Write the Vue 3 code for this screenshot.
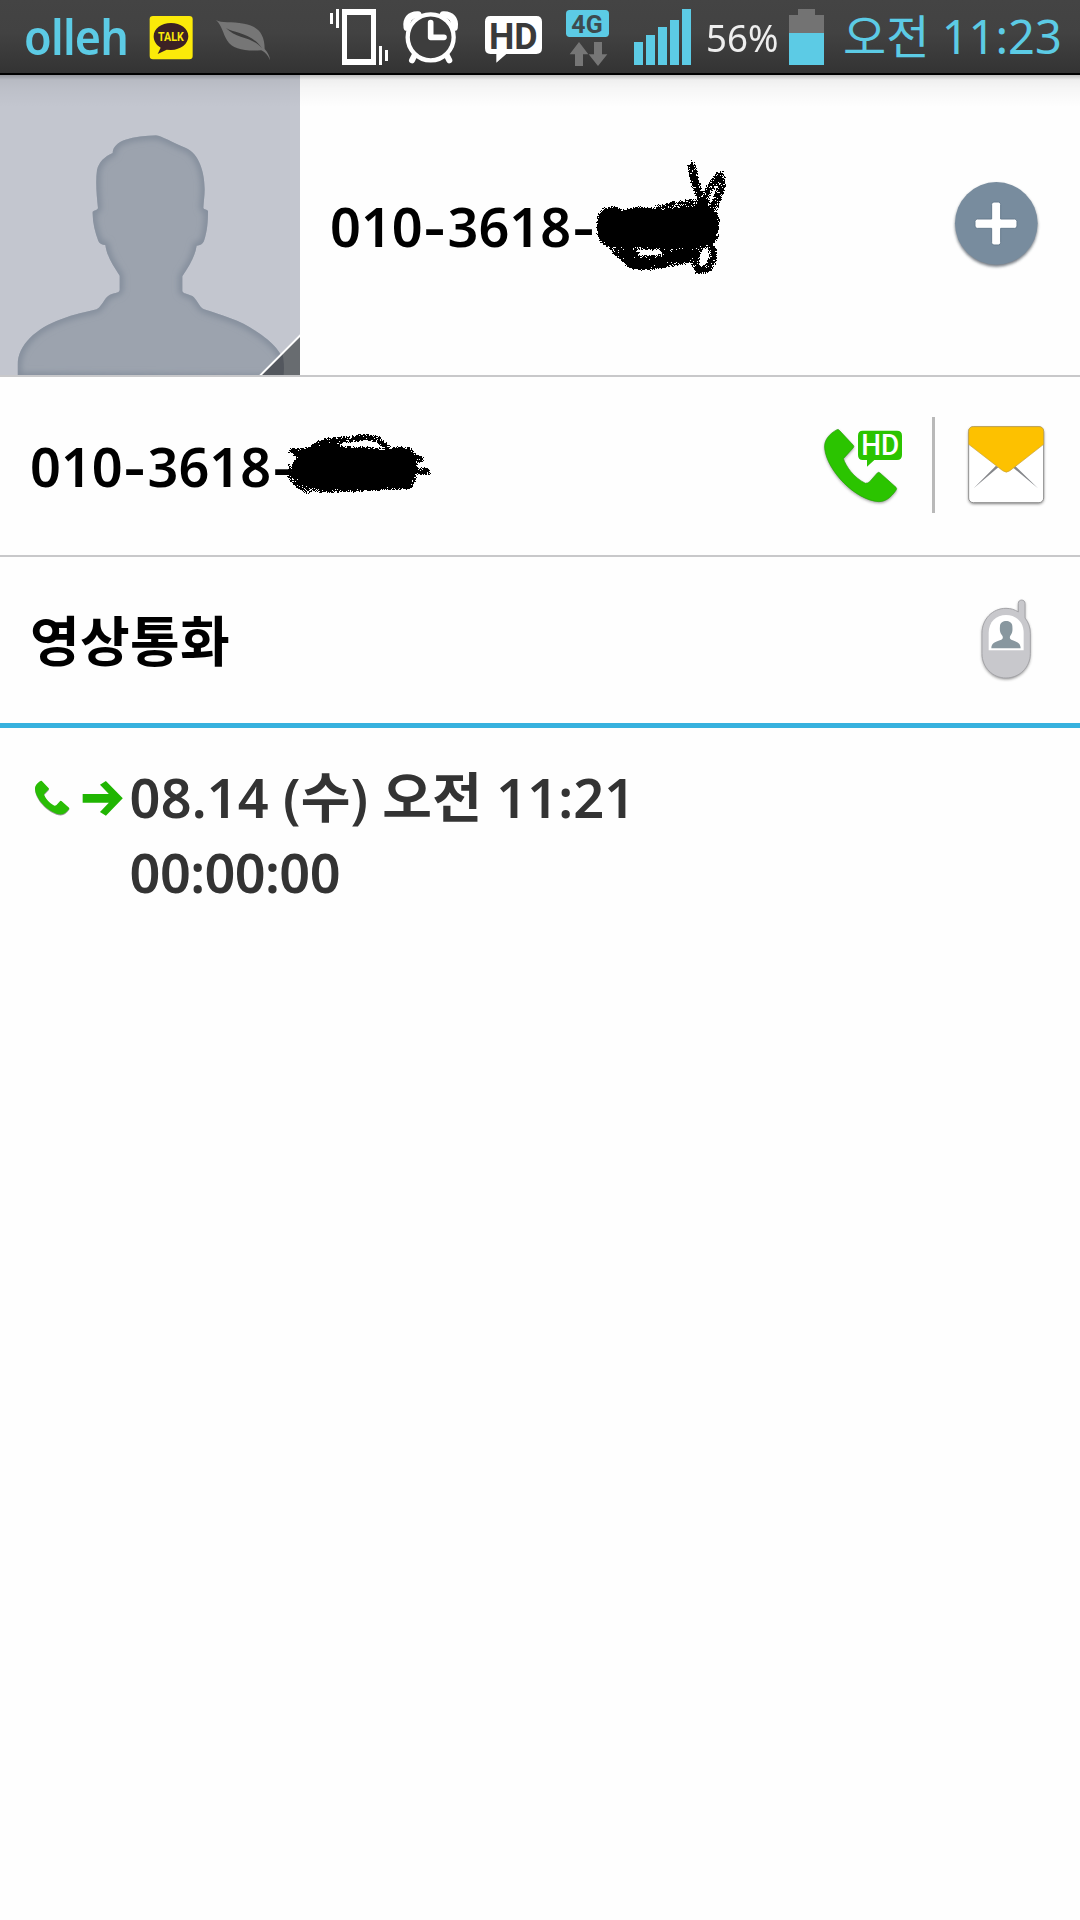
<template>
  <div class="screen">
    <!-- status bar -->
    <header class="status">
      <span class="carrier">olleh</span>
      <svg class="talk" viewBox="444 0 138 219">
        <rect x="449" y="48" width="129" height="130" rx="10" fill="#fbea09" />
        <path d="M513 69c29 0 52 17 52 40s-23 41-52 41l-13-1-27 13 9-19c-13-7-21-20-21-34 0-23 23-40 52-40z" fill="#3c2124" />
        <text x="474" y="123" class="roboto" font-size="37" font-weight="700" textLength="77" lengthAdjust="spacingAndGlyphs" fill="#fbea09">TALK</text>
      </svg>
      <svg class="leaf" viewBox="642 0 174 219">
        <path d="M648 60c16 10 46 4 84 11 41 7 62 30 62 76 9 10 15 20 16 34-6-15-13-24-26-30-48 3-86-2-103-30-13-22-14-43-33-61z" fill="#767676" />
        <path d="M678 84c24 16 77 13 108 61-32-37-75-27-108-61z" fill="#3d3d3d" />
      </svg>
      <svg class="vibrate" viewBox="87 0 180 219">
        <path fill="#fff" fill-rule="evenodd" d="M126 27h102v168H126zM141 45v132h72V45z" />
        <path fill="#fff" d="M90 39h9v33h-9zM108 27h9v57h-9zM237 138h9v57h-9zM255 150h9v33h-9z" />
      </svg>
      <svg class="alarm" viewBox="303 0 180 219">
        <g fill="none" stroke="#fff" stroke-linecap="round">
          <path d="M321 82c-4-23 9-39 33-38M463 82c4-23-9-39-33-38" stroke-width="21" />
          <path d="M344 165l-8 16M440 165l8 16" stroke-width="18" />
          <circle cx="392" cy="112" r="69" stroke-width="13" fill="#3d3d3d" />
          <path d="M392 68v44h40" stroke-width="17" stroke-linejoin="round" />
        </g>
      </svg>
      <svg class="hd" viewBox="549 0 180 219">
        <path d="M571 48h138q17 0 17 17v80q0 17-17 17h-90l-30 26v-26h-18q-16 0-16-17V65q0-17 16-17z" fill="#fff" />
        <text x="567" y="147" class="roboto" font-size="109" font-weight="700" textLength="146" lengthAdjust="spacingAndGlyphs" fill="#3a3a3a">HD</text>
      </svg>
      <svg class="net" viewBox="39 0 144 219">
        <rect x="48" y="30" width="129" height="81" rx="11" fill="#5ccbe5" />
        <text x="64" y="99" class="roboto" font-size="79" font-weight="700" textLength="94" lengthAdjust="spacingAndGlyphs" fill="#3d4b4f">4G</text>
        <path d="M87 126l28 37H99v35H75v-35H59zM132 126h24v37h16l-28 35-28-35h16z" fill="#767676" />
      </svg>
      <svg class="bars" viewBox="249 0 180 219">
        <rect v-for="(top, i) in signal" :key="i" :x="252 + i * 36" :y="top" width="27" :height="195 - top" fill="#5ccbe5" />
      </svg>
      <span class="percent">56%</span>
      <svg class="battery" viewBox="21 0 120 219">
        <path d="M54 27h51v18h27v54H27V45h27z" fill="#737373" />
        <path d="M27 99h105v96H27z" fill="#5ccbe5" />
      </svg>
      <span class="clock">오전 11:23</span>
    </header>

    <!-- contact header -->
    <section class="contact">
      <svg class="avatar" viewBox="0 15 900 900">
        <defs>
          <clipPath id="body"><path :d="person" /></clipPath>
          <filter id="soft" x="-10%" y="-10%" width="120%" height="120%"><feGaussianBlur stdDeviation="9" /></filter>
        </defs>
        <path d="M0 15h900v900H0z" fill="#c3c6cf" />
        <path :d="person" fill="#9ca3ae" />
        <g clip-path="url(#body)">
          <path :d="person" fill="none" stroke="#818b9a" stroke-width="20" filter="url(#soft)" />
        </g>
        <path d="M780 915l120-120v120z" fill="#686c70" />
        <path d="M782 915l65-65q7 30 4 65z" fill="#53575e" />
        <path d="M780 917L902 795" stroke="#fff" stroke-width="6" />
      </svg>
      <span class="number">010<i>-</i>3618<i>-</i></span>
      <svg class="add" viewBox="90 45 280 290">
        <circle cx="229" cy="196" r="124" fill="#444e58" opacity=".75" filter="url(#shade)" />
        <circle cx="229" cy="190" r="124" fill="#788c9e" />
        <path d="M222 126h13q7 0 7 7v44h42q7 0 7 7v14q0 7-7 7h-42v43q0 7-7 7h-13q-7 0-7-7v-43h-43q-7 0-7-7v-14q0-7 7-7h43v-44q0-7 7-7z" fill="#fff" stroke="#667b8e" stroke-width="3" />
        <defs>
          <filter id="shade" x="-10%" y="-10%" width="120%" height="120%"><feGaussianBlur stdDeviation="5" /></filter>
        </defs>
      </svg>
      <svg class="scribble first" viewBox="0 0 420 150" shape-rendering="crispEdges">
        <path :d="firstMark" />
      </svg>
    </section>

    <!-- phone number -->
    <section class="row phone">
      <span class="number">010<i>-</i>3618<i>-</i></span>
      <svg class="call" viewBox="60 70 260 250">
        <path :d="handset" fill="#555" opacity=".6" transform="translate(0 4)" filter="url(#shade)" />
        <path :d="handset" fill="#2bc400" stroke="#25a007" stroke-width="2" />
        <path d="M188 90h103q15 0 15 15v58q0 15-15 15h-68l-22 20v-20h-13q-14 0-14-15v-58q0-15 14-15z" fill="#2bc400" />
        <text x="184" y="164" class="roboto" font-size="86" font-weight="500" textLength="114" lengthAdjust="spacingAndGlyphs" fill="#fff">HD</text>
      </svg>
      <div class="divider"></div>
      <svg class="mail" viewBox="495 68 250 255">
        <rect x="506" y="84" width="225" height="227" rx="14" fill="#333" opacity=".6" filter="url(#shade)" />
        <rect x="506" y="79" width="225" height="228" rx="14" fill="#fff" stroke="#929292" stroke-width="3" />
        <path d="M588 196l7 5-74 63zM645 196l-7 5 76 63z" fill="#85878b" />
        <path d="M520 79h197q14 0 14 14v39l-101 79q-11 9-22 0L506 132V93q0-14 14-14z" fill="#fdc100" stroke="#c3a044" stroke-width="2" />
      </svg>
      <svg class="scribble second" viewBox="0 0 450 110" shape-rendering="crispEdges">
        <path :d="secondMark" />
      </svg>
    </section>

    <!-- video call -->
    <section class="row video">
      <span class="label">영상통화</span>
      <svg class="cell" viewBox="85 50 165 255">
        <path :d="cell" fill="#444" opacity=".6" transform="translate(0 4)" filter="url(#shade)" />
        <path :d="cell" fill="#c8c8cc" stroke="#a5a5a9" stroke-width="3" />
        <path d="M114 210v-52c0-34 23-54 52-54s53 20 53 54v52z" fill="#fff" />
        <path d="M122 204c0-16 12-20 30-26 5-2 6-8 2-13-7-9-7-16-6-28 1-20 36-20 37 0 1 12 1 19-5 28-4 5-3 11 2 13 17 6 28 10 28 26z" fill="#88979f" />
      </svg>
    </section>

    <!-- call log -->
    <section class="log">
      <svg class="outgoing" viewBox="75 30 225 225" preserveAspectRatio="none">
        <path :d="handset" transform="translate(54.5 55) scale(.376 .466)" fill="#555" opacity=".6" />
        <path :d="handset" transform="translate(54.5 52) scale(.376 .466)" fill="#29bd05" />
        <path d="M195 132h62l-21-28 14-11 40 52-40 52-14-11 21-28h-62z" fill="#20b502" />
      </svg>
      <div class="entry">
        <div class="when">08.14 (수) 오전 11:21</div>
        <div class="length">00:00:00</div>
      </div>
    </section>
  </div>
</template>

<script setup>
const signal = [126, 105, 81, 60, 27];

const person =
  "M53 920v-35c0-60 55-110 130-137 40-16 75-22 107-30 22-15 24-42 48-47 15-3 21-6 21-12v-42c-22-34-38-58-43-92-9 0-18-4-21-12-10-27-18-57-17-88 5-4 13-4 16-10-4-40-8-80-3-115 6-24 22-40 47-51 0-18 15-32 38-40 28-9 60-12 92-13 17 2 50 22 88 37 42 17 58 75 58 125 0 20-3 38-4 56 2 6 11 3 14 9 0 32-2 60-12 90-4 10-12 13-22 14-5 32-20 57-43 92v45c4 7 12 7 30 14 13 8 20 33 35 40 50 17 110 33 155 65 50 32 87 70 87 110v34z";

const handset =
  "M111 87q4-2 7 2l42 45q3 3 0 7l-30 33c8 23 30 56 66 74q8 0 13-5l23-26q4-4 8 0l48 43q4 4 0 9c-17 23-31 34-52 34-70-4-155-93-162-159-3-25 13-44 37-57z";

const cell =
  "M166 84c15 0 26 4 37 11V69c0-13 20-13 20 0v44c10 12 16 28 16 46v61c0 41-33 73-73 73s-72-32-72-73v-61c0-43 32-75 72-75z";

// seeded random, the marks look the same on every load
function rng(seed) {
  return () => {
    seed = (seed * 16807) % 2147483647;
    return seed / 2147483647;
  };
}

// spray brush: single pixel dots scattered along a line
function spray(points, r, density, rand) {
  let d = "";
  for (let i = 1; i < points.length; i++) {
    const [x1, y1] = points[i - 1];
    const [x2, y2] = points[i];
    const n = Math.ceil(Math.hypot(x2 - x1, y2 - y1) * density * r);
    for (let k = 0; k < n; k++) {
      const t = rand();
      const a = rand() * Math.PI * 2;
      const s = rand() ** 0.7 * r;
      const x = Math.round(x1 + (x2 - x1) * t + Math.cos(a) * s);
      const y = Math.round(y1 + (y2 - y1) * t + Math.sin(a) * s);
      d += `M${x} ${y}h1v1h-1z`;
    }
  }
  return d;
}

function mark(seed, blob, strokes) {
  const rand = rng(seed);
  // same winding as the dots, so that overlaps stay filled
  let d = "M" + blob.map((p) => p.join(" ")).join("L") + "z";
  d += spray([...blob, blob[0]], 2.5, 2, rand);
  strokes.forEach(([r, density, points]) => {
    d += spray(points, r, density, rand);
  });
  return d;
}

const firstMark = mark(
  71,
  [[278, 88], [279, 76], [284, 69], [293, 68], [302, 71], [318, 68], [330, 69], [345, 70], [370, 67], [386, 65], [392, 69], [397, 76], [396, 96], [390, 104], [374, 108], [348, 108], [310, 107], [295, 107], [287, 104], [280, 97]],
  [
    [5, 5, [[295, 109], [303, 116], [312, 124], [328, 125], [345, 122], [370, 118]]],
    [5, 5, [[304, 114], [316, 120], [340, 119], [360, 114], [375, 112]]],
    [4, 6, [[310, 121], [322, 127]]],
    [4, 6, [[303, 109], [316, 114]]],
    [5, 6, [[343, 108], [350, 115], [372, 111]]],
    [4, 2.4, [[337, 68], [352, 65], [370, 62], [388, 62]]],
    [4.5, 4, [[371, 24], [374, 40], [378, 52], [382, 66]]],
    [4.5, 3, [[384, 60], [389, 48], [400, 34], [401, 45], [397, 59], [392, 68]]],
    [4.5, 3.4, [[378, 108], [374, 119], [378, 130], [388, 128], [393, 117], [391, 106]]],
    [4, 3, [[279, 90], [283, 99], [292, 106]]],
    [3, 3, [[395, 74], [395, 88], [391, 102]]],
  ]
);

const secondMark = mark(
  35,
  [[293, 65], [294, 53], [298, 48], [295, 43], [306, 39], [320, 36], [333, 35], [345, 38], [360, 38], [385, 40], [400, 38], [410, 39], [415, 48], [415, 62], [411, 75], [400, 77], [370, 78], [345, 79], [320, 80], [309, 76], [300, 72]],
  [
    [3.5, 3, [[312, 37], [325, 31], [345, 29], [365, 27], [378, 29], [388, 38]]],
    [4, 3, [[318, 35], [338, 32]]],
    [3.5, 4, [[410, 46], [422, 49]]],
    [3.5, 4, [[412, 60], [428, 61]]],
    [4, 3, [[291, 41], [302, 41]]],
    [5, 3, [[292, 56], [292, 66], [298, 73], [308, 79]]],
    [3, 1.5, [[320, 79], [350, 79], [375, 77], [410, 76]]],
  ]
);
</script>

<style>
body {
  background: #fefefe;
}
</style>

<style scoped>
.screen {
  width: 1080px;
  height: 1920px;
  overflow: hidden;
  background: #fefefe;
  color: #000;
  font-family: "Noto Sans", "Noto Sans CJK KR", sans-serif;
}
svg {
  display: block;
  flex: none;
}
.status {
  display: flex;
  box-sizing: border-box;
  height: 75px;
  border-bottom: 2px solid #000;
  background: linear-gradient(#444, #424242 45%, #333);
  color: #5ccbe5;
  line-height: 73px;
  white-space: nowrap;
}
.status svg {
  height: 73px;
}
.status span {
  flex: none;
}
.roboto {
  font-family: Roboto, sans-serif;
}
.carrier {
  width: 104px;
  margin-left: 24px;
  font-size: 48px;
  font-weight: 600;
  letter-spacing: -0.8px;
  transform: scaleX(0.935);
  transform-origin: left;
}
.talk {
  width: 46px;
  margin-left: 20px;
}
.leaf {
  width: 58px;
  margin-left: 20px;
}
.vibrate {
  width: 60px;
  margin-left: 57px;
}
.alarm {
  width: 60px;
  margin-left: 12px;
}
.hd {
  width: 60px;
  margin-left: 22px;
}
.net {
  width: 48px;
  margin-left: 20px;
}
.bars {
  width: 60px;
  margin-left: 22px;
}
.percent {
  width: 72px;
  margin-left: 13px;
  color: #eee;
  font-size: 39px;
  transform: scaleX(0.94);
  transform-origin: left;
}
.battery {
  width: 40px;
  margin-left: 9px;
}
.clock {
  margin-left: 16px;
  font-size: 47px;
}
.contact {
  position: relative;
  display: flex;
  align-items: center;
  height: 300px;
  border-bottom: 2px solid #c8c8ca;
}
/* shadow that the status bar casts */
.contact::after {
  content: "";
  position: absolute;
  top: 0;
  left: 0;
  width: 100%;
  height: 32px;
  background: linear-gradient(rgba(0, 0, 0, 0.24), rgba(0, 0, 0, 0.06) 5px, rgba(0, 0, 0, 0.03) 14px, transparent);
}
.avatar {
  width: 300px;
  height: 300px;
}
.number {
  flex: 1;
  font-size: 54px;
  font-weight: 600;
  line-height: 74px;
}
.number i {
  display: inline-block;
  margin: 0 3.8px;
  font-style: normal;
  transform: scaleX(1.22);
}
.contact .number {
  margin: 2px 0 0 30px;
}
.add {
  width: 93.3px;
  height: 96.7px;
  margin: 0 36.7px 3px 0;
}
.scribble {
  position: absolute;
}
.first {
  top: 65px;
  left: 320px;
  width: 420px;
  height: 150px;
}
.second {
  top: 33px;
  left: 0;
  width: 450px;
  height: 110px;
}
.row {
  position: relative;
  display: flex;
  align-items: center;
  padding-left: 30px;
}
.phone {
  height: 178px;
  border-bottom: 2px solid #c8c8ca;
}
.call {
  width: 86.7px;
  height: 83.3px;
  margin: 0 25px 0 0;
}
.divider {
  width: 3px;
  height: 96px;
  margin: 0 30px 2px 0;
  background: #b9b9b9;
}
.mail {
  width: 83.3px;
  height: 85px;
  margin: 0 31.7px 2px 0;
}
.video {
  height: 166px;
  border-bottom: 5px solid #37b1de;
}
.label {
  flex: 1;
  margin-top: 1px;
  font-size: 54px;
  font-weight: 700;
  letter-spacing: 0.3px;
  line-height: 74px;
}
.cell {
  width: 55px;
  height: 85px;
  margin: 0 46.5px 1px 0;
}
.log {
  display: flex;
  padding: 32px 0 0 31.6px;
  color: #333;
}
.outgoing {
  width: 95px;
  height: 75px;
}
.entry {
  margin-left: 3px;
  font-size: 54px;
  font-weight: 600;
  line-height: 75px;
  white-space: nowrap;
}
.when {
  letter-spacing: 0.15px;
}
.length {
  letter-spacing: -0.6px;
}
</style>
